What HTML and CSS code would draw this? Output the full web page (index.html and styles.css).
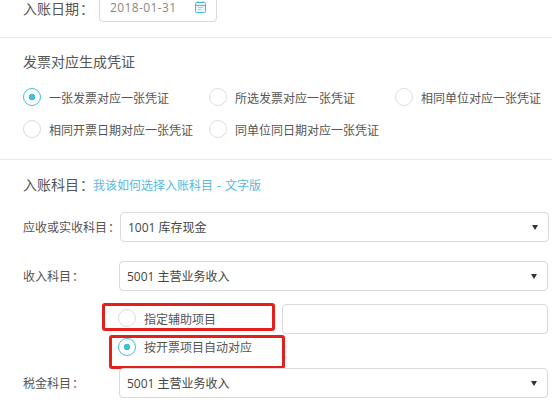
FILE: index.html
```html
<!DOCTYPE html>
<html lang="zh-CN">
<head>
    <meta charset="UTF-8">
    <title>入账设置</title>
    <link rel="stylesheet" href="styles.css">
</head>
<body>
    <div class="page">
        <section class="date-section">
            <label class="date-label">入账日期<span class="colon">：</span></label>
            <div class="date-input">
                <span class="date-value">2018-01-31</span>
                <svg class="cal-icon" width="11" height="12" viewBox="0 0 11 12">
                    <path d="M3 0v2M8 0v2" fill="none" stroke="#3fbfdc" stroke-width="1"/>
                    <rect x=".5" y="1.5" width="10" height="10" rx="1" fill="#eaf8fb" stroke="#3fbfdc"/>
                    <path d="M.5 4.5h10" stroke="#3fbfdc"/>
                    <path d="M3 6.5h5M3 8.5h3" stroke="#8fd9ea"/>
                </svg>
            </div>
        </section>

        <section class="voucher-section">
            <h3 class="section-title">发票对应生成凭证</h3>
            <div class="voucher-options">
                <div class="radio-item"><span class="radio checked"></span>一张发票对应一张凭证</div>
                <div class="radio-item"><span class="radio"></span>所选发票对应一张凭证</div>
                <div class="radio-item"><span class="radio"></span>相同单位对应一张凭证</div>
                <div class="radio-item"><span class="radio"></span>相同开票日期对应一张凭证</div>
                <div class="radio-item"><span class="radio"></span>同单位同日期对应一张凭证</div>
            </div>
        </section>

        <section class="account-section">
            <div class="account-title">入账科目<span class="colon">：</span><a href="#" class="help-link">我该如何选择入账科目 - 文字版</a></div>

            <div class="form-row first-row">
                <label>应收或实收科目<span class="colon">：</span></label>
                <div class="select-box">1001 库存现金<span class="arrow"></span></div>
            </div>

            <div class="form-row income-row">
                <label>收入科目<span class="colon">：</span></label>
                <div class="select-box">5001 主营业务收入<span class="arrow"></span></div>
            </div>

            <div class="aux-block">
                <div class="aux-row">
                    <div class="radio-item"><span class="radio"></span>指定辅助项目</div>
                    <div class="aux-input"></div>
                </div>
                <div class="radio-item auto-item"><span class="radio checked"></span>按开票项目自动对应</div>
                <div class="mark mark-one"></div>
                <div class="mark mark-two"></div>
            </div>

            <div class="form-row tax-row">
                <label>税金科目<span class="colon">：</span></label>
                <div class="select-box">5001 主营业务收入<span class="arrow"></span></div>
            </div>
        </section>
    </div>
</body>
</html>
```

FILE: styles.css
```css
html, body {
    margin: 0;
    height: 100%;
    overflow: hidden;
}
body {
    font-family: "Open Sans", "Noto Sans CJK SC", sans-serif;
    font-size: 12px;
    color: #555;
    background: #fff;
}
.page {
    width: 552px;
}
.colon {
    margin-left: 1px;
    margin-right: -1px;
    font-family: "Noto Sans CJK TC", sans-serif;
}
.date-section {
    display: flex;
    align-items: center;
    height: 46px;
    margin-top: -8px;
    padding: 0 0 15px 23px;
    box-sizing: border-box;
    border-bottom: 1px solid #e8e8e8;
}
.date-label {
    width: 76px;
    padding-top: 2px;
    font-size: 14px;
    line-height: 14px;
    white-space: nowrap;
}
.date-input {
    display: flex;
    align-items: center;
    justify-content: space-between;
    width: 118px;
    height: 30px;
    padding: 0 10px;
    box-sizing: border-box;
    border: 1px solid #d9d9d9;
    border-radius: 4px;
    color: #888;
}
.date-value {
    letter-spacing: .4px;
}
.cal-icon {
    display: block;
}
.voucher-section {
    height: 122px;
    padding: 0 0 0 23px;
    box-sizing: border-box;
    border-bottom: 1px solid #e8e8e8;
}
.section-title {
    margin: 0;
    padding-top: 14px;
    font-size: 14px;
    font-weight: normal;
    line-height: 20px;
}
.voucher-options {
    display: grid;
    grid-template-columns: 186px 186px 1fr;
    grid-auto-rows: 32px;
    margin-top: 10px;
}
.radio-item {
    display: flex;
    align-items: center;
    white-space: nowrap;
}
.radio {
    width: 18px;
    height: 18px;
    margin-top: -2px;
    margin-right: 8px;
    box-sizing: border-box;
    border: 1px solid #ddd;
    border-radius: 50%;
    background: #fff;
}
.radio.checked {
    border-color: #3fbfdc;
    background: radial-gradient(circle, #3fbfdc 0 3px, #fff 3.6px);
}
.account-section {
    padding: 0 4px 0 23px;
}
.account-title {
    padding-top: 14px;
    font-size: 14px;
    line-height: 20px;
    white-space: nowrap;
}
.help-link {
    font-size: 12px;
    word-spacing: 1px;
    color: #5bb8dc;
    text-decoration: none;
}
.form-row {
    display: flex;
    align-items: center;
}
.form-row label {
    width: 96px;
    flex: none;
    white-space: nowrap;
}
.first-row {
    margin-top: 16px;
}
.first-row label {
    width: 97px;
}
.income-row {
    margin-top: 19px;
}
.tax-row {
    margin-top: 8px;
}
.select-box {
    position: relative;
    flex: 1;
    height: 30px;
    padding-left: 7px;
    line-height: 29px;
    box-sizing: border-box;
    border: 1px solid #d9d9d9;
    border-radius: 4px;
    color: #444;
}
.first-row .select-box {
    margin-right: -1px;
}
.arrow {
    position: absolute;
    top: 12px;
    right: 10px;
    width: 0;
    height: 0;
    border-top: 5px solid #333;
    border-left: 3.5px solid transparent;
    border-right: 3.5px solid transparent;
}
.aux-block {
    position: relative;
    margin-top: 13px;
    padding-left: 95px;
}
.aux-row {
    display: flex;
    align-items: center;
    height: 30px;
}
.aux-row .radio-item {
    width: 164px;
}
.aux-row .radio {
    margin-top: -3px;
}
.aux-input {
    flex: 1;
    height: 30px;
    box-sizing: border-box;
    border: 1px solid #d9d9d9;
    border-radius: 4px;
}
.auto-item {
    height: 26px;
}
.auto-item .radio {
    margin-top: 0;
}
.mark {
    position: absolute;
    box-sizing: border-box;
    border: 3px solid #e3201b;
    border-radius: 3px;
}
.mark-one {
    top: -1px;
    left: 79px;
    width: 173px;
    height: 28px;
}
.mark-two {
    top: 31px;
    left: 86px;
    width: 176px;
    height: 34px;
}
```
